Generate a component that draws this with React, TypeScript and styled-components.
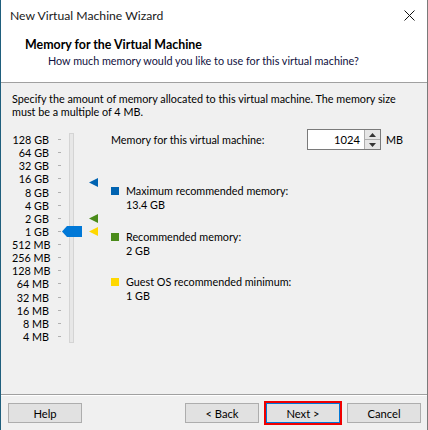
import React from "react";
import styled, { createGlobalStyle, css } from "styled-components";

const Global = createGlobalStyle`
  html, body { margin: 0; padding: 0; background: #f0f0f0; }
  body { font-family: Lato, "Liberation Sans", sans-serif; font-size: 10.8px; color: #000; }
  * { box-sizing: border-box; }
`;

const Window = styled.div`
  width: 428px;
  height: 430px;
  display: flex;
  flex-direction: column;
  border-left: 1px solid #1f5f7d;
  border-right: 1px solid #7a7a7a;
  background: #f0f0f0;
  overflow: hidden;
`;

const TitleBar = styled.div`
  height: 30px;
  display: flex;
  align-items: center;
  justify-content: space-between;
  padding: 0 10px 0 9px;
  background: #fff;
  font-size: 12.2px;
  color: #1a1a1a;
`;

const CloseIcon = styled.svg`
  width: 11px;
  height: 11px;
  margin-right: 2px;
`;

const Header = styled.div`
  height: 53px;
  background: #fff;
  border-bottom: 1px solid #a0a0a0;
  padding: 8px 0 0 24px;
  display: flex;
  flex-direction: column;
  gap: 2px;
`;

const HeaderTitle = styled.div`
  font-weight: 700;
  font-size: 12.4px;
  line-height: 14px;
`;

const HeaderSub = styled.div`
  padding-left: 23px;
  line-height: 14px;
  color: #101040;
`;

const Body = styled.div`
  flex: 1;
  padding: 9px 10px 0 11px;
  display: flex;
  flex-direction: column;
`;

const Description = styled.p`
  margin: 0;
  line-height: 13px;
`;

const Main = styled.div`
  display: flex;
  margin-top: 15px;
`;

const SliderPanel = styled.div`
  position: relative;
  width: 98px;
  height: 215px;
  flex: none;
`;

const ScaleList = styled.ul`
  list-style: none;
  margin: 0;
  padding: 0;
  width: 37px;
  display: flex;
  flex-direction: column;
`;

const ScaleLabel = styled.li`
  height: 13.13px;
  line-height: 13px;
  text-align: right;
  white-space: nowrap;
  position: relative;
  &::after {
    content: "";
    position: absolute;
    left: 46px;
    top: 6px;
    width: 3px;
    height: 1px;
    background: #b0b0b0;
  }
`;

const Track = styled.div`
  position: absolute;
  left: 57px;
  top: 0px;
  width: 5px;
  height: 210px;
  background: #e7e7e7;
  border: 1px solid #d4d4d4;
`;

const Thumb = styled.svg`
  position: absolute;
  left: 50px;
  width: 20px;
  height: 11px;
`;

const Marker = styled.svg`
  position: absolute;
  left: 77px;
  width: 9px;
  height: 9px;
`;

const RightCol = styled.div`
  flex: 1;
  padding-left: 1px;
  display: flex;
  flex-direction: column;
`;

const MemoryRow = styled.div`
  display: flex;
  align-items: center;
  height: 21px;
  margin-top: -4px;
`;

const MemoryLabel = styled.span`
  width: 196px;
`;

const SpinBox = styled.div`
  display: flex;
  height: 21px;
  border: 1px solid #7a7a7a;
  background: #fff;
`;

const SpinInput = styled.div`
  width: 56px;
  text-align: right;
  padding-right: 4px;
  line-height: 19px;
  font-size: 11.2px;
`;

const SpinButtons = styled.div`
  width: 16px;
  display: flex;
  flex-direction: column;
  border-left: 1px solid #adadad;
`;

const SpinButton = styled.div<{ $down?: boolean }>`
  flex: 1;
  background: #e5e5e5;
  display: flex;
  align-items: center;
  justify-content: center;
  ${(p) => p.$down && css`border-top: 1px solid #adadad;`}
`;

const Unit = styled.span`
  margin-left: 5px;
`;

const Legend = styled.div`
  display: flex;
  flex-direction: column;
  gap: 17.5px;
  margin-top: 34px;
`;

const LegendItem = styled.div`
  display: flex;
  align-items: flex-start;
`;

const Swatch = styled.span<{ $color: string }>`
  width: 8px;
  height: 8px;
  margin-top: 3px;
  margin-right: 7px;
  background: ${(p) => p.$color};
  flex: none;
`;

const LegendText = styled.div`
  display: flex;
  flex-direction: column;
`;

const LegendLine = styled.span`
  height: 14px;
  line-height: 14px;
`;

const Footer = styled.div`
  border-top: 1px solid #a0a0a0;
  box-shadow: inset 0 1px 0 #fff;
  height: 36px;
  display: flex;
  align-items: flex-start;
  padding: 8px 6px 0 7px;
  gap: 7px;
`;

const Button = styled.button<{ $focused?: boolean }>`
  width: 74px;
  height: 20px;
  background: #e1e1e1;
  border: 1px solid #adadad;
  font-family: inherit;
  font-size: 11.2px;
  color: #000;
  padding: 0;
  line-height: 17px;
  ${(p) =>
    p.$focused &&
    css`
      border: 1px solid #0078d7;
      outline: 2px solid #f00000;
      outline-offset: 0;
    `}
`;

const Spacer = styled.div`
  flex: 1;
`;

const scale = [
  "128 GB", "64 GB", "32 GB", "16 GB", "8 GB", "4 GB", "2 GB", "1 GB",
  "512 MB", "256 MB", "128 MB", "64 MB", "32 MB", "16 MB", "8 MB", "4 MB",
];

const ROW = 13.13;
const yFor = (idx: number) => 6.5 + idx * ROW;

const markers = [
  { color: "#0063b1", idx: 4 - Math.log2(13.4 / 8) },
  { color: "#4a8b1a", idx: 6 },
  { color: "#ffd800", idx: 7 },
];

const legend = [
  { color: "#0063b1", label: "Maximum recommended memory:", value: "13.4 GB" },
  { color: "#4a8b1a", label: "Recommended memory:", value: "2 GB" },
  { color: "#ffd800", label: "Guest OS recommended minimum:", value: "1 GB" },
];

export default function App() {
  return (
    <>
      <Global />
      <Window>
        <TitleBar>
          <span>New Virtual Machine Wizard</span>
          <CloseIcon viewBox="0 0 11 11">
            <path d="M0.5 0.5 L10.5 10.5 M10.5 0.5 L0.5 10.5" stroke="#111" strokeWidth="1" fill="none" />
          </CloseIcon>
        </TitleBar>
        <Header>
          <HeaderTitle>Memory for the Virtual Machine</HeaderTitle>
          <HeaderSub>How much memory would you like to use for this virtual machine?</HeaderSub>
        </Header>
        <Body>
          <Description>
            Specify the amount of memory allocated to this virtual machine. The memory size must be a multiple of 4 MB.
          </Description>
          <Main>
            <SliderPanel>
              <ScaleList>
                {scale.map((s) => (
                  <ScaleLabel key={s}>{s}</ScaleLabel>
                ))}
              </ScaleList>
              <Track />
              <Thumb viewBox="0 0 20 11" style={{ top: yFor(7) - 5.5 }}>
                <path d="M0 5.5 L5 0 H20 V11 H5 Z" fill="#0078d7" />
              </Thumb>
              {markers.map((m) => (
                <Marker key={m.color} viewBox="0 0 9 9" style={{ top: yFor(m.idx) - 4.5 }}>
                  <path d="M0 4.5 L9 0 V9 Z" fill={m.color} />
                </Marker>
              ))}
            </SliderPanel>
            <RightCol>
              <MemoryRow>
                <MemoryLabel>Memory for this virtual machine:</MemoryLabel>
                <SpinBox>
                  <SpinInput>1024</SpinInput>
                  <SpinButtons>
                    <SpinButton>
                      <svg width="7" height="4" viewBox="0 0 7 4"><path d="M3.5 0 L7 4 H0 Z" fill="#333" /></svg>
                    </SpinButton>
                    <SpinButton $down>
                      <svg width="7" height="4" viewBox="0 0 7 4"><path d="M0 0 H7 L3.5 4 Z" fill="#333" /></svg>
                    </SpinButton>
                  </SpinButtons>
                </SpinBox>
                <Unit>MB</Unit>
              </MemoryRow>
              <Legend>
                {legend.map((l) => (
                  <LegendItem key={l.label}>
                    <Swatch $color={l.color} />
                    <LegendText>
                      <LegendLine>{l.label}</LegendLine>
                      <LegendLine>{l.value}</LegendLine>
                    </LegendText>
                  </LegendItem>
                ))}
              </Legend>
            </RightCol>
          </Main>
          <Spacer />
        </Body>
        <Footer>
          <Button>Help</Button>
          <Spacer />
          <Button>&lt; Back</Button>
          <Button $focused>Next &gt;</Button>
          <Button>Cancel</Button>
        </Footer>
      </Window>
    </>
  );
}
